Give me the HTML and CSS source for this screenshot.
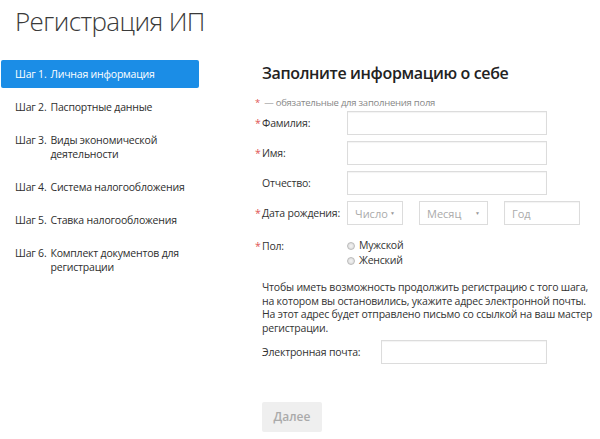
FILE: index.html
```html
<!DOCTYPE html>
<html lang="ru">

<head>
    <meta charset="UTF-8">
    <meta name="viewport" content="width=device-width, initial-scale=1.0">
    <title>Регистрация ИП</title>
    <link rel="stylesheet" href="styles.css">
</head>

<body>
    <h1 class="page-title">Регистрация ИП</h1>

    <div class="layout">
        <ul class="steps">
            <li class="step active"><span class="step-num">Шаг 1.</span><span>Личная информация</span></li>
            <li class="step"><span class="step-num">Шаг 2.</span><span>Паспортные данные</span></li>
            <li class="step"><span class="step-num">Шаг 3.</span><span>Виды экономической деятельности</span></li>
            <li class="step"><span class="step-num">Шаг 4.</span><span>Система налогообложения</span></li>
            <li class="step"><span class="step-num">Шаг 5.</span><span>Ставка налогообложения</span></li>
            <li class="step"><span class="step-num">Шаг 6.</span><span>Комплект документов для регистрации</span></li>
        </ul>

        <form class="form-area" id="personForm">
            <h2 class="form-title">Заполните информацию о себе</h2>
            <p class="note"><span class="star">*</span> — обязательные для заполнения поля</p>

            <div class="row">
                <label class="label" for="lastName"><span class="star">*</span>Фамилия:</label>
                <input class="field" type="text" id="lastName">
            </div>
            <div class="row">
                <label class="label" for="firstName"><span class="star">*</span>Имя:</label>
                <input class="field" type="text" id="firstName">
            </div>
            <div class="row">
                <label class="label" for="middleName">Отчество:</label>
                <input class="field" type="text" id="middleName">
            </div>
            <div class="row">
                <label class="label" for="day"><span class="star">*</span>Дата рождения:</label>
                <div class="date">
                    <div class="select day" id="day">Число<span class="caret">▼</span></div>
                    <div class="select month">Месяц<span class="caret">▼</span></div>
                    <input class="field year" type="text" placeholder="Год">
                </div>
            </div>
            <div class="row gender">
                <span class="label"><span class="star">*</span>Пол:</span>
                <div class="radios">
                    <label class="radio"><span class="dot"></span>Мужской</label>
                    <label class="radio"><span class="dot"></span>Женский</label>
                </div>
            </div>

            <p class="hint">Чтобы иметь возможность продолжить регистрацию с того шага,<br>
                на котором вы остановились, укажите адрес электронной почты.<br>
                На этот адрес будет отправлено письмо со ссылкой на ваш мастер<br>
                регистрации.</p>

            <div class="row email-row">
                <label class="label email-label" for="email">Электронная почта:</label>
                <input class="field" type="email" id="email">
            </div>

            <button type="button" class="btn" disabled>Далее</button>
        </form>
    </div>
</body>

</html>
```

FILE: styles.css
```css
body {
    font-family: "Open Sans", "Noto Sans", Arial, sans-serif;
    margin: 0;
    padding: 0;
    background-color: #ffffff;
    color: #333;
    width: 600px;
    overflow: hidden;
}

.page-title {
    margin: 0;
    padding: 3px 0 0 15px;
    height: 57px;
    box-sizing: border-box;
    font-size: 26px;
    font-weight: 300;
    line-height: 36px;
    letter-spacing: -0.6px;
    color: #3a3a3a;
}

.layout {
    display: flex;
}

/* left column with the wizard steps */
.steps {
    list-style: none;
    margin: 3px 0 0 1px;
    padding: 0;
    width: 198px;
    flex-shrink: 0;
}

.step {
    display: flex;
    gap: 4px;
    padding: 7px 8px 7px 14px;
    margin-bottom: 5px;
    font-size: 10.5px;
    letter-spacing: -0.2px;
    line-height: 14px;
    color: #2e2e2e;
    border-radius: 2px;
}

.step-num {
    white-space: nowrap;
}

.step.active {
    background-color: #1b8de6;
    color: #fff;
}

/* right column, the form itself */
.form-area {
    padding-left: 63px;
    width: 338px;
}

.form-title {
    margin: 5px 0 0;
    font-size: 16px;
    font-weight: 600;
    line-height: 22px;
    letter-spacing: -0.35px;
    color: #222;
}

.note {
    margin: 12px 0 0 -7px;
    font-size: 9.5px;
    letter-spacing: -0.25px;
    line-height: 14px;
    color: #888;
}

.star {
    color: #e05555;
    display: inline-block;
    width: 7px;
    margin-left: -7px;
}

.note .star {
    margin-left: 0;
}

.row {
    display: flex;
    align-items: center;
    margin-top: 6px;
}

.note + .row {
    margin-top: 1px;
}

.label {
    width: 85px;
    flex-shrink: 0;
    font-size: 10.5px;
    letter-spacing: -0.2px;
    white-space: nowrap;
    color: #333;
}

.field {
    box-sizing: border-box;
    width: 200px;
    height: 24px;
    border: 1px solid #dcdcdc;
    box-shadow: inset 0 1px 1px rgba(0, 0, 0, 0.05);
    font-family: inherit;
    font-size: 11px;
    padding: 0 7px;
    margin: 0;
    outline: none;
}

.field::placeholder {
    color: #aaa;
}

.date {
    display: flex;
    gap: 16px;
}

.select {
    box-sizing: border-box;
    height: 24px;
    border: 1px solid #dcdcdc;
    display: flex;
    align-items: center;
    justify-content: space-between;
    padding: 0 7px;
    font-size: 11px;
    color: #aaa;
}

.select.day {
    width: 56px;
}

.select.month {
    width: 69px;
}

.caret {
    font-size: 5px;
    color: #999;
}

.field.year {
    width: 76px;
}

.gender {
    margin-top: 13px;
    align-items: flex-start;
}

.gender .label {
    margin-top: 1px;
}

.radios {
    display: flex;
    flex-direction: column;
}

.radio {
    display: flex;
    align-items: center;
    gap: 4px;
    font-size: 10.5px;
    letter-spacing: -0.2px;
    line-height: 15px;
    color: #333;
}

.dot {
    display: inline-block;
    width: 6px;
    height: 6px;
    border-radius: 50%;
    border: 1px solid #bbb;
    background: radial-gradient(circle, #f4f4f4, #d6d6d6);
}

.hint {
    margin: 13px 0 0;
    font-size: 10.5px;
    letter-spacing: -0.2px;
    line-height: 13.7px;
    color: #333;
    white-space: nowrap;
}

.email-row {
    margin-top: 4px;
}

.email-label {
    width: 119px;
}

.email-row .field {
    width: 166px;
}

.btn {
    margin-top: 38px;
    width: 60px;
    height: 30px;
    border: none;
    border-radius: 2px;
    background-color: #efefef;
    color: #aaa;
    font-family: inherit;
    font-size: 12px;
    font-weight: 600;
    padding: 0;
}
```
